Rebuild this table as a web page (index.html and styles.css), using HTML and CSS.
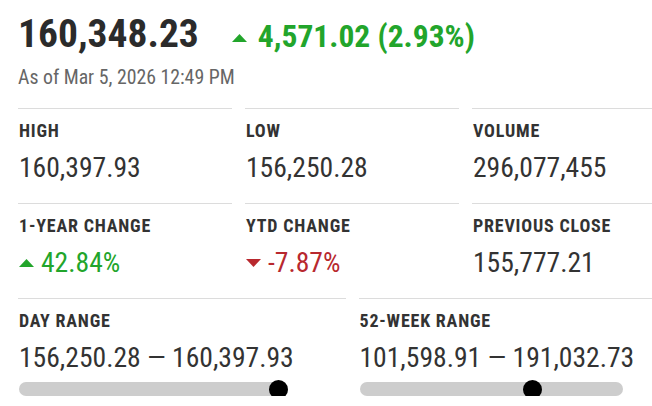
FILE: index.html
```html
<!DOCTYPE html>
<html>
<head>
<meta charset="utf-8">
<link rel="stylesheet" href="styles.css">
</head>
<body>
<div class="quote">
  <div class="head">
    <span class="price">160,348.23</span>
    <span class="change up">
      <svg class="tri" width="15" height="8" viewBox="0 0 15 8"><polygon points="7.5,0 15,8 0,8" fill="currentColor"/></svg>
      4,571.02 (2.93%)
    </span>
  </div>
  <div class="asof">As of Mar 5, 2026 12:49 PM</div>

  <div class="grid three">
    <div class="cell"><div class="label">HIGH</div><div class="value">160,397.93</div></div>
    <div class="cell"><div class="label">LOW</div><div class="value">156,250.28</div></div>
    <div class="cell"><div class="label">VOLUME</div><div class="value">296,077,455</div></div>
    <div class="cell"><div class="label">1-YEAR CHANGE</div><div class="value up"><svg class="tri-s" width="15" height="8" viewBox="0 0 15 8"><polygon points="7.5,0 15,8 0,8" fill="currentColor"/></svg>42.84%</div></div>
    <div class="cell"><div class="label">YTD CHANGE</div><div class="value down"><svg class="tri-s" width="15" height="8" viewBox="0 0 15 8"><polygon points="0,0 15,0 7.5,8" fill="currentColor"/></svg>-7.87%</div></div>
    <div class="cell"><div class="label">PREVIOUS CLOSE</div><div class="value">155,777.21</div></div>
  </div>
  <div class="grid two">
    <div class="cell"><div class="label">DAY RANGE</div><div class="value">156,250.28 — 160,397.93</div>
      <div class="track"><span class="knob" style="left: 98.8%"></span></div></div>
    <div class="cell"><div class="label">52-WEEK RANGE</div><div class="value">101,598.91 — 191,032.73</div>
      <div class="track"><span class="knob" style="left: 65.7%"></span></div></div>
  </div>
</div>
</body>
</html>
```
FILE: styles.css
```css
html, body { margin: 0; padding: 0; background: #fff; overflow: hidden; }
body { font-family: "Roboto Condensed", Roboto, "Liberation Sans", sans-serif; font-stretch: 75%; color: #333; }
.quote { width: 668px; padding: 12px 0 0 18px; }
.head { display: flex; align-items: baseline; height: 44px; }
.price { font-size: 39.5px; font-weight: 700; line-height: 44px; color: #2b2b2b; }
.change { font-size: 31.5px; font-weight: 700; line-height: 44px; margin-left: 33px; display: flex; align-items: baseline; }
.up { color: #22a52b; }
.down { color: #b8282e; }
.tri { margin-right: 11px; position: relative; top: -5px; }
.asof { font-size: 19.8px; color: #666; line-height: 20px; margin-top: 12px; }
.grid { display: grid; column-gap: 13px; }
.three { grid-template-columns: repeat(3, 1fr); margin-top: 20px; }
.two { grid-template-columns: repeat(2, 1fr); }
.cell { border-top: 1px solid #dcdcdc; padding: 12px 0 20px 1px; }
.label { font-size: 18px; font-weight: 700; letter-spacing: 0.8px; line-height: 20px; color: #333; }
.value { font-size: 27.6px; line-height: 30px; margin-top: 12px; display: flex; align-items: center; }
.tri-s { margin-right: 7px; }
.two .cell { padding-bottom: 0; }
.track { position: relative; width: 263px; height: 14px; margin-top: 9px; background: #cdcdcd; border-radius: 7px; }
.knob { position: absolute; top: 50%; width: 19px; height: 19px; margin: -9.5px 0 0 -9.5px; border-radius: 50%; background: #000; }
```
